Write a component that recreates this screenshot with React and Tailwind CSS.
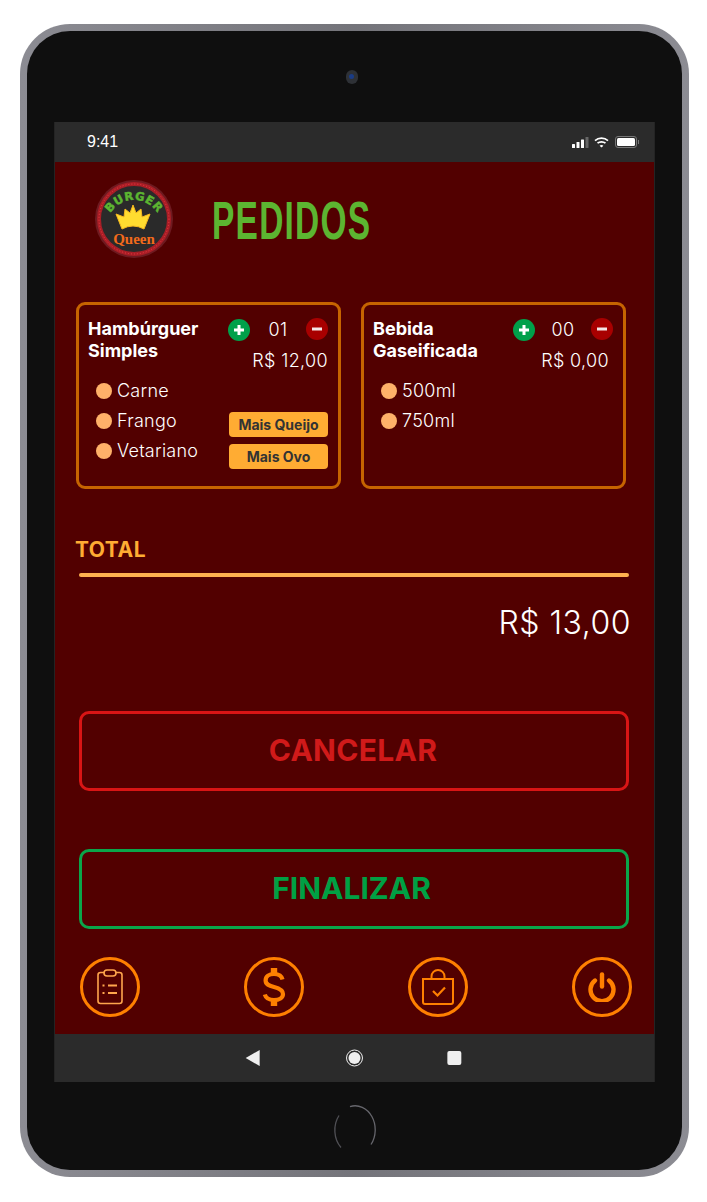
const inter = "font-['Inter',sans-serif]";

function Plus({ className = "" }) {
  return (
    <span className={`flex h-[22px] w-[22px] items-center justify-center rounded-full bg-[#00a04a] ${className}`}>
      <svg width="14" height="14" viewBox="0 0 14 14"><path d="M7 2v10M2 7h10" stroke="#fff" strokeWidth="3" /></svg>
    </span>
  );
}
function Minus({ className = "" }) {
  return (
    <span className={`flex h-[22px] w-[22px] items-center justify-center rounded-full bg-[#a80000] ${className}`}>
      <svg width="14" height="14" viewBox="0 0 14 14"><path d="M2 7h10" stroke="#f4e6e6" strokeWidth="3" /></svg>
    </span>
  );
}
function Option({ label }) {
  return (
    <div className="flex h-[30px] items-center gap-[5px]">
      <span className="h-4 w-4 rounded-full bg-[#ffb169]" />
      <span className="text-[18px] font-light leading-[22px] tracking-[0.25px] text-white">{label}</span>
    </div>
  );
}
function Chip({ children }) {
  return (
    <div className="flex h-[25px] w-[99px] items-center justify-center self-end rounded bg-[#ffac33] text-[14px] font-bold text-[#333333]">
      {children}
    </div>
  );
}
function Card({ title, count, price, priceClass = "", options, chips }) {
  return (
    <div className="relative flex h-[187px] w-[265px] justify-between rounded-[9px] border-[3px] border-[#c66400] pl-[9px] pr-[10px] pt-[13px]">
      <div className="w-[130px]">
        <div className="text-[18px] font-bold leading-[22px] text-white">
          {title[0]}<br />{title[1]}
        </div>
        <div className="mt-[14px] pl-2">
          {options.map((o) => <Option key={o} label={o} />)}
        </div>
      </div>
      <div className="flex w-[100px] flex-col">
        <div className="mt-[1px] flex items-center justify-between">
          <Plus />
          <span className="text-[18px] font-light leading-[22px] tracking-[0.3px] text-white">{count}</span>
          <Minus className="-mt-[2px]" />
        </div>
        <div className={`mt-[9px] text-right text-[18px] font-light leading-[22px] tracking-[0.35px] text-white ${priceClass}`}>{price}</div>
        {chips && (
          <div className="mt-[40px] flex flex-col gap-[7px]">
            {chips.map((c) => <Chip key={c}>{c}</Chip>)}
          </div>
        )}
      </div>
    </div>
  );
}
function Logo() {
  return (
    <svg width="80" height="80" viewBox="0 0 80 80" className="shrink-0">
      <defs>
        <path id="arc" d="M12 49 A28 28 0 0 1 68 49" />
      </defs>
      <circle cx="40" cy="40" r="39" fill="#6e1a20" />
      <circle cx="40" cy="40" r="35" fill="#2a2a2a" stroke="#a81e26" strokeWidth="4" />
      <circle cx="40" cy="40" r="35" fill="none" stroke="#ee3a44" strokeWidth="1" strokeDasharray="1 2" />
      <text fontFamily="'DejaVu Sans',sans-serif" fontWeight="700" fontSize="11.5" fill="#5cb531" stroke="#5cb531" strokeWidth=".5" textAnchor="middle" letterSpacing=".6">
        <textPath href="#arc" startOffset="50%">BURGER</textPath>
      </text>
      <path d="M22 35 L30 38 L31 30 L36 34 L39 26 L42 34 L47 30 L48 38 L56 35 L50 50 Q39 44 28 50 Z" fill="#ffdc30" stroke="#f5b81e" strokeWidth="1" strokeLinejoin="round" />
      <text x="40" y="65" textAnchor="middle" fontFamily="'Liberation Serif',serif" fontWeight="700" fontSize="15" fill="#f26a1b">Queen</text>
    </svg>
  );
}
function Round({ children }) {
  return (
    <div className="flex h-[60px] w-[60px] items-center justify-center rounded-full border-[3px] border-[#ff8000]">
      {children}
    </div>
  );
}
function Clipboard() {
  return (
    <svg width="26" height="36" viewBox="0 0 26 36" fill="none" stroke="#ffa64d" strokeWidth="1.6">
      <rect x="1" y="3.5" width="24" height="31" rx="2.5" />
      <rect x="7" y="1" width="12" height="6" rx="3" fill="#520000" />
      <path d="M11 16.5h9M11 24h9" strokeWidth="2" />
      <path d="M5.5 16.5h2M5.5 24h2" strokeWidth="2" />
    </svg>
  );
}
function Dollar() {
  return (
    <svg width="24" height="38" viewBox="0 0 24 38" fill="none" stroke="#ff8000" strokeWidth="4.2">
      <path d="M12 0v6M12 32v6" strokeWidth="6.4" />
      <path d="M20.5 11.5c-.8-3.6-4-5.5-8.5-5.5-4.8 0-8.4 2.6-8.4 6.5 0 4 3.4 5.2 8.4 6.5 5 1.3 9 2.8 9 7 0 3.9-3.9 6-9 6-4.8 0-8.2-2-9.2-5.5" />
    </svg>
  );
}
function Bag() {
  return (
    <svg width="32" height="36" viewBox="0 0 32 36" fill="none" stroke="#ff8000" strokeWidth="2">
      <path d="M1 10h30v23a2 2 0 0 1-2 2H3a2 2 0 0 1-2-2z" />
      <path d="M9.5 10V7.5a6.5 6.5 0 0 1 13 0V10" />
      <path d="M11 22l4.5 4.5L23 18.5" strokeWidth="2.2" />
    </svg>
  );
}
function Power() {
  return (
    <svg width="28" height="30" viewBox="0 0 28 30" fill="none" stroke="#ff8000" strokeWidth="4.4" strokeLinecap="round">
      <path d="M14 2.5v12" />
      <path d="M7 8.5a11.5 11.5 0 1 0 14 0" />
    </svg>
  );
}
function StatusIcons() {
  return (
    <div className="flex items-center gap-[5px]">
      <svg width="17" height="11" viewBox="0 0 17 11">
        <rect x="0" y="7" width="3" height="4" rx=".5" fill="#fff" />
        <rect x="4.5" y="5" width="3" height="6" rx=".5" fill="#fff" />
        <rect x="9" y="2.5" width="3" height="8.5" rx=".5" fill="#fff" />
        <rect x="13.5" y="0" width="3" height="11" rx=".5" fill="#666" />
      </svg>
      <svg width="15" height="11" viewBox="0 0 15 11" fill="none" stroke="#fff" strokeWidth="1.7">
        <path d="M1 3.6c3.6-3.2 9.4-3.2 13 0" />
        <path d="M3.5 6.2c2.2-1.9 5.8-1.9 8 0" />
        <path d="M7.5 10.6 5.6 8.7c1.1-.9 2.7-.9 3.8 0z" fill="#fff" stroke="none" />
      </svg>
      <div className="ml-[1px] flex items-center">
        <div className="h-[12px] w-[22px] rounded-[3px] border border-[#777] p-[1px]">
          <div className="h-full w-full rounded-[1.5px] bg-white" />
        </div>
        <div className="ml-[1px] h-[4px] w-[1px] bg-[#777]" />
      </div>
    </div>
  );
}

export default function App() {
  return (
    <div className={`h-[1202px] w-[707px] overflow-hidden bg-white pl-5 pt-6 ${inter}`}>
      <div className="h-[1153px] w-[669px] rounded-[50px] bg-gradient-to-r from-[#8c8c93] via-[#74747a] to-[#8c8c93] p-[7px]">
        <div className="flex h-full flex-col rounded-[43px] bg-[#0f0f0f] px-[27px]">
          <div className="flex h-[91px] shrink-0 items-center justify-center pr-[6px]">
            <span className="flex h-[14px] w-[12px] items-center justify-center rounded-full bg-[#2e3136]">
              <span className="h-[5px] w-[5px] rounded-full bg-[#1a3c86]" />
            </span>
          </div>

          <div className="flex h-[960px] shrink-0 flex-col bg-[#242424] px-[1px]">
            <div className="flex h-[40px] shrink-0 items-center justify-between bg-[#2b2b2b] pl-[32px] pr-[15px]">
              <span className="font-['Liberation_Sans',sans-serif] text-[16px] font-normal text-white">9:41</span>
              <StatusIcons />
            </div>

            <main className="flex h-[872px] shrink-0 flex-col bg-[#520000] pl-[21px] pr-[25px]">
              <header className="mt-[17px] flex h-[80px] items-center">
                <div className="ml-[18px]"><Logo /></div>
                <div className="ml-[38px] mt-[2px] origin-left scale-x-[0.62] text-[54px] font-bold leading-none tracking-[2px] text-[#5cb531] font-['Liberation_Sans',sans-serif]">PEDIDOS</div>
              </header>

              <div className="mt-[43px] flex gap-5">
                <Card
                  title={["Hambúrguer", "Simples"]}
                  count="01"
                  price="R$ 12,00"
                  options={["Carne", "Frango", "Vetariano"]}
                  chips={["Mais Queijo", "Mais Ovo"]}
                />
                <Card
                  title={["Bebida", "Gaseificada"]}
                  count="00"
                  price="R$ 0,00"
                  priceClass="pr-[4px]"
                  options={["500ml", "750ml"]}
                />
              </div>

              <div className="-ml-[1px] mt-[48px] text-[21px] font-bold leading-[26px] tracking-[0.5px] text-[#ffac33]">TOTAL</div>
              <div className="ml-[3px] mt-[10px] h-1 w-[550px] rounded-full bg-[#ffb14f]" />
              <div className="mt-[26px] w-[555px] text-right text-[32px] font-light leading-[40px] tracking-[0.5px] text-white">R$ 13,00</div>

              <button className="ml-[3px] mt-[68px] flex h-[80px] w-[550px] shrink-0 items-center justify-center rounded-[10px] border-[3px] border-[#d81515] pb-[2px] pr-[2px] text-[30px] font-bold tracking-[0.3px] text-[#d01a1a]">CANCELAR</button>
              <button className="ml-[3px] mt-[58px] flex h-[80px] w-[550px] shrink-0 items-center justify-center rounded-[10px] border-[3px] border-[#0aa64a] pb-[2px] pr-[5px] text-[30px] font-bold text-[#00a044]">FINALIZAR</button>

              <div className="ml-[4px] mt-[28px] flex w-[552px] justify-between">
                <Round><Clipboard /></Round>
                <Round><Dollar /></Round>
                <Round><Bag /></Round>
                <Round><Power /></Round>
              </div>
            </main>

            <div className="flex h-[48px] shrink-0 items-center bg-[#2b2b2b]">
              <svg width="600" height="48" viewBox="0 0 600 48">
                <path d="M191 24l14-8v16z" fill="#efefef" />
                <circle cx="300" cy="24" r="8" fill="none" stroke="#efefef" strokeWidth="1" />
                <circle cx="300" cy="24" r="6" fill="#efefef" />
                <rect x="393" y="17" width="14" height="14" rx="2" fill="#efefef" />
              </svg>
            </div>
          </div>

          <div className="flex justify-center pl-[1px] pt-[22px]">
            <svg width="44" height="52" viewBox="0 0 44 52" fill="none" stroke="#66666c" strokeWidth="1.3">
              <path d="M17 2.6A20 24 0 0 1 38 40.5" />
              <path d="M8 43.5A20 24 0 0 1 6 11.5" opacity=".75" />
            </svg>
          </div>
        </div>
      </div>
    </div>
  );
}
